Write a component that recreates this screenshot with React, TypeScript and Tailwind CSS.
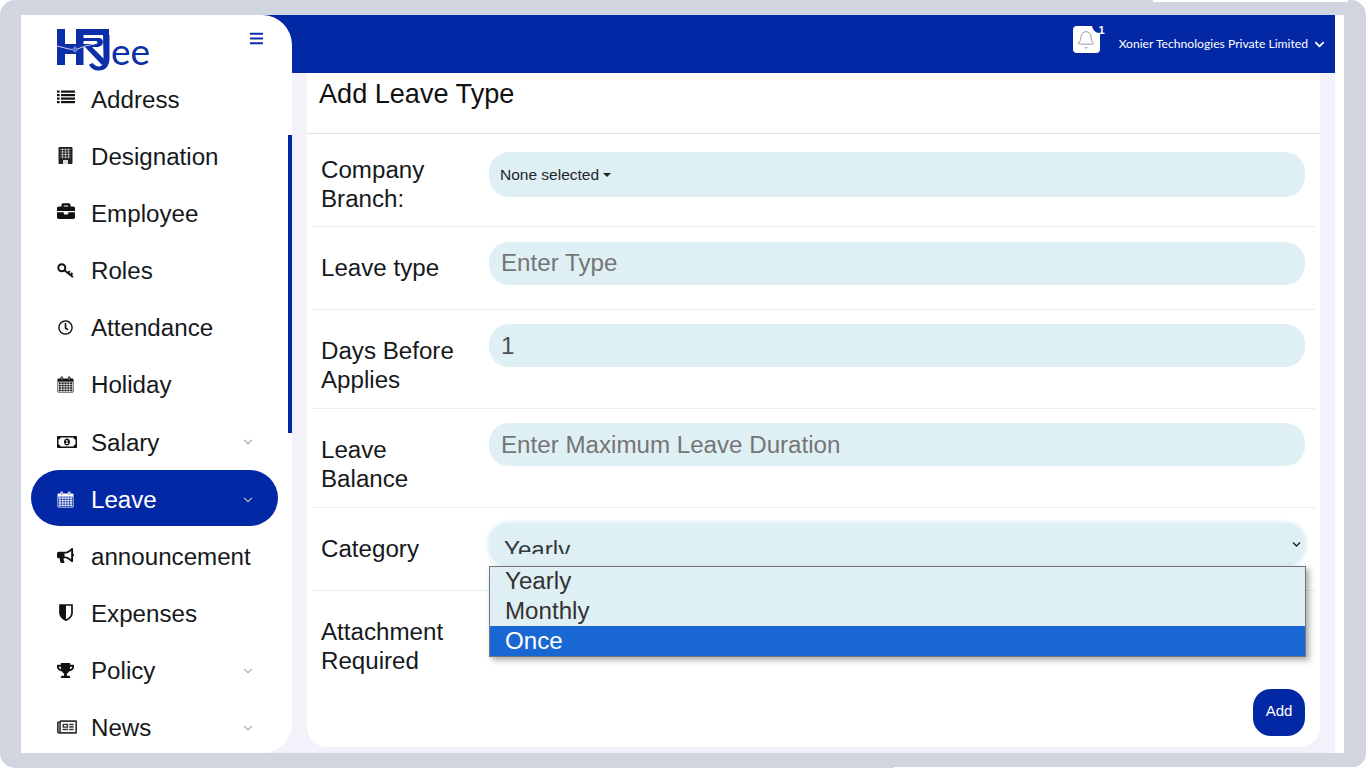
import { Bell, ChevronDown } from "lucide-react";
import type { ReactNode } from "react";
import {
  FaBars,
  FaBriefcase,
  FaBullhorn,
  FaChevronDown,
  FaRegClock,
  FaRegMoneyBillAlt,
  FaRegNewspaper,
  FaTrophy,
} from "react-icons/fa";

function ListIcon() {
  return (
    <svg width="18" height="14" viewBox="0 0 18 14" fill="currentColor" className="-mt-[3px]">
      <rect x="0" y="0.5" width="2.600" height="2.200" />
      <rect x="4" y="0.5" width="14" height="2.200" />
      <rect x="0" y="4" width="2.600" height="2.200" />
      <rect x="4" y="4" width="14" height="2.200" />
      <rect x="0" y="7.500" width="2.600" height="2.200" />
      <rect x="4" y="7.500" width="14" height="2.200" />
      <rect x="0" y="11" width="2.600" height="2.200" />
      <rect x="4" y="11" width="14" height="2.200" />
    </svg>
  );
}

function BuildingIcon() {
  return (
    <svg width="15" height="17" viewBox="0 0 15 17" className="ml-[1px]">
      <rect x="0.500" y="0" width="14" height="17" rx="1" fill="#222" />
      <path d="M2.500 2.500h10M2.500 5h10M2.500 7.500h10M2.500 10h10M4.500 1.500v10M7.500 1.500v10M10.500 1.500v10" stroke="#bbb" strokeWidth=".8" fill="none" />
      <rect x="5" y="13" width="5" height="4" fill="#ddd" />
    </svg>
  );
}

function KeyIcon() {
  return (
    <svg width="17" height="15" viewBox="0 0 17 15" fill="none" stroke="currentColor">
      <circle cx="4.800" cy="4.800" r="3.500" strokeWidth="2" />
      <path d="M7.300 7.300 L16 14 M11 10.200 L12.800 8.200 M13.600 12 L15.400 10" strokeWidth="2" />
    </svg>
  );
}

function ShieldIcon() {
  return (
    <svg width="14" height="17" viewBox="0 0 14 17" className="-mt-[1px] ml-[2px]">
      <path d="M1 1h12v8c0 3.500-3 5.800-6 7.200C4 14.800 1 12.500 1 9z" fill="#fff" stroke="#111" strokeWidth="1.700" />
      <path d="M1 1h6v15.200C4 14.800 1 12.500 1 9z" fill="#111" />
    </svg>
  );
}

function CalendarIcon({ grid }: { grid: string }) {
  return (
    <svg width="17" height="17" viewBox="0 0 17 17" fill="currentColor">
      <path d="M1.500 2.500h2v-1a1 1 0 0 1 1-1h.6a1 1 0 0 1 1 1v1h4.800v-1a1 1 0 0 1 1-1h.6a1 1 0 0 1 1 1v1h2a1 1 0 0 1 1 1v12a1 1 0 0 1-1 1h-14a1 1 0 0 1-1-1v-12a1 1 0 0 1 1-1z" />
      <g fill="none" stroke={grid} strokeWidth=".7">
        <path d="M4.900 1.200v2.600M12.100 1.200v2.600" />
        <path d="M1.500 6h14v9.500h-14z" />
        <path d="M1.500 8.400h14M1.500 10.800h14M1.500 13.200h14M4.300 6v9.500M7.100 6v9.500M9.900 6v9.500M12.700 6v9.500" />
      </g>
    </svg>
  );
}

function Logo() {
  return (
    <svg width="96" height="48" viewBox="0 0 96 48" className="mt-[12px] block">
      <g fill="#0a2fa8">
        <rect x="0" y="2" width="8" height="36" />
        <rect x="19" y="2" width="7.500" height="36" />
        <rect x="8" y="17" width="11" height="10" />
        <rect x="26" y="2" width="26" height="6" />
        <path d="M26 11h16c5 0 6 8-1 9h-15v-3h13c2 0 2-3 0-3h-13z" />
        <path d="M28 20h7l14 14-4 4z" />
        <path d="M46 8h6.500v23c0 8-4 12.500-10.500 12.500-5 0-8-2-10-6l4-1.500c1 2 3.500 3.500 6 3.500 3.500 0 4.500-3.500 4.500-8.500z" />
      </g>
      <path d="M0 19 L12 22 L18 23 L28 19 L38 17" stroke="#fff" strokeWidth="0.800" fill="none" />
      <rect x="15.500" y="20" width="5" height="5" fill="#5f7dcc" transform="rotate(45 18 22.500)" />
      <text x="54" y="38" fill="#0a2fa8" fontSize="37" className="[font-family:Lato,sans-serif]">
        ee
      </text>
    </svg>
  );
}

const NAV: { label: string; icon: ReactNode; caret?: boolean; active?: boolean }[] = [
  { label: "Address", icon: <ListIcon /> },
  { label: "Designation", icon: <BuildingIcon /> },
  { label: "Employee", icon: <FaBriefcase size={18} className="-mt-[4px]" /> },
  { label: "Roles", icon: <KeyIcon /> },
  { label: "Attendance", icon: <FaRegClock size={15} className="ml-[1px]" /> },
  { label: "Holiday", icon: <CalendarIcon grid="#fff" /> },
  { label: "Salary", icon: <FaRegMoneyBillAlt size={20} />, caret: true },
  { label: "Leave", icon: <CalendarIcon grid="#0328a5" />, caret: true, active: true },
  { label: "announcement", icon: <FaBullhorn size={17} /> },
  { label: "Expenses", icon: <ShieldIcon /> },
  { label: "Policy", icon: <FaTrophy size={17} />, caret: true },
  { label: "News", icon: <FaRegNewspaper size={20} className="text-[#333]" />, caret: true },
];

function Field({ className, children }: { className: string; children?: ReactNode }) {
  return <div className={`w-[816px] rounded-[20px] bg-[#dff0f5] ${className}`}>{children}</div>;
}

function Label({ children, top }: { children: ReactNode; top: string }) {
  return <div className={`w-[177px] pl-[9px] text-[24.15px] leading-[29px] text-[#16191c] ${top}`}>{children}</div>;
}

export default function App() {
  return (
    <div className="h-[768px] w-[1366px] overflow-hidden bg-white [font-family:'Liberation_Sans',sans-serif]">
      <div className="relative flex h-full rounded-[15px] bg-[#d1d5e0] pb-[15px] pl-[21px] pr-[22px] pt-[15px]">
        <aside className="relative z-10 h-[738px] w-[271px] shrink-0 overflow-hidden rounded-r-[30px] bg-white">
          <div className="flex h-[55.625px] items-start justify-between pl-[36px] pr-[28px]">
            <Logo />
            <FaBars className="mt-[16px] text-[#0a2fa8]" size={15} />
          </div>
          <nav>
            {NAV.map((n) => (
              <div
                key={n.label}
                className={`ml-[10px] flex w-[247px] items-center rounded-full pl-[26px] pr-[23px] text-[24.15px] leading-[29px] ${
                  n.active ? "-mt-[0.675px] mb-[1.825px] h-[56px] bg-[#0328a5] pt-[4px] text-white" : "h-[57.15px] text-[#16191c]"
                }`}
              >
                <span className={`-mt-[1px] flex w-[34px] shrink-0 ${n.active ? "text-white" : "text-[#111]"}`}>{n.icon}</span>
                <span className="flex-1">{n.label}</span>
                {n.caret && <ChevronDown size={14} className="text-[#a9b4c4]" />}
              </div>
            ))}
          </nav>
          <div className="absolute right-0 top-[120px] h-[298px] w-[4px] bg-[#0328a5]" />
        </aside>

        <div className="-ml-[30px] flex h-[738px] w-[1082px] flex-col bg-white pr-[9px]">
          <header className="relative flex h-[58px] shrink-0 items-center justify-end bg-[#0328a5] pr-[10px] text-white">
            <div className="relative mb-[9px] mr-[19px] flex h-[27px] w-[27px] items-center justify-center rounded-[4px] bg-white">
              <Bell size={20} strokeWidth={1} className="text-[#888]" />
              <span className="absolute -right-[7px] -top-[8px] h-[15px] w-[15px] rounded-full bg-[#0328a5]" />
              <span className="absolute -right-[5px] -top-[2.5px] text-[11px] font-bold leading-[13px]">1</span>
            </div>
            <span className="text-[12.15px] [font-family:Lato,sans-serif]">Xonier Technologies Private Limited</span>
            <FaChevronDown size={11} className="ml-[6px]" />
          </header>

          <div className="min-h-0 flex-1 bg-[#f3f2fb] pb-[6px] pl-[45px] pr-[15px]">
            <main className="h-full rounded-b-[20px] bg-white">
              <div className="h-[61px] border-b border-[#dee2e6] pl-[12px] pt-[4px] text-[27.1px] leading-[33px] text-[#111]">
                Add Leave Type
              </div>
              <div className="px-[5px]">
                <div className="flex h-[93px] border-b border-[#e3f1f5]">
                  <Label top="pt-[20.5px]">
                    Company
                    <br />
                    Branch:
                  </Label>
                  <div className="pt-[18px]">
                    <Field className="flex h-[45px] items-center pl-[11px] text-[15.5px] text-[#212529]">
                      None selected
                      <span className="ml-[4px] mt-[1px] h-0 w-0 border-x-[4px] border-t-[4px] border-x-transparent border-t-[#212529]" />
                    </Field>
                  </div>
                </div>
                <div className="flex h-[83px] border-b border-[#e3f1f5]">
                  <Label top="pt-[26px]">Leave type</Label>
                  <div className="pt-[15px]">
                    <Field className="flex h-[43px] items-center pl-[12px] text-[24.15px] text-[#757575]">Enter Type</Field>
                  </div>
                </div>
                <div className="flex h-[99px] border-b border-[#e3f1f5]">
                  <Label top="pt-[26px]">
                    Days Before
                    <br />
                    Applies
                  </Label>
                  <div className="pt-[14px]">
                    <Field className="flex h-[43px] items-center pl-[12px] pt-[1px] text-[24.15px] text-[#495057]">1</Field>
                  </div>
                </div>
                <div className="flex h-[99px] border-b border-[#e3f1f5]">
                  <Label top="pt-[26px]">
                    Leave
                    <br />
                    Balance
                  </Label>
                  <div className="pt-[14px]">
                    <Field className="flex h-[43px] items-center pl-[12px] pt-[1px] text-[24.15px] text-[#757575]">
                      Enter Maximum Leave Duration
                    </Field>
                  </div>
                </div>
                <div className="flex h-[83px] border-b border-[#e3f1f5]">
                  <Label top="pt-[26px]">Category</Label>
                  <div className="relative z-10 pt-[15px]">
                    <Field className="relative h-[43px] pl-[15px] pt-[12px] text-[24.15px] text-[#343a40] shadow-[0_0_5px_1px_#d5ecf7]">
                      <div className="h-[19px] overflow-hidden leading-[29px]">Yearly</div>
                      <FaChevronDown size={9} className="absolute right-[4px] top-[17px] text-[#222]" />
                    </Field>
                    <div className="absolute left-0 top-[58px] w-[817px] border border-[#767676] bg-[#dff0f5] text-[24.15px] leading-[30px] text-[#333] shadow-[3px_3px_6px_rgba(0,0,0,0.35)]">
                      <div className="h-[29px] pl-[15px] leading-[28px]">Yearly</div>
                      <div className="h-[30px] pl-[15px]">Monthly</div>
                      <div className="h-[30px] bg-[#1967d2] pl-[15px] text-white">Once</div>
                    </div>
                  </div>
                </div>
                <div className="flex h-[98px]">
                  <Label top="pt-[26px]">
                    Attachment
                    <br />
                    Required
                  </Label>
                  <div className="pt-[15px]">
                    <Field className="h-[43px]" />
                  </div>
                </div>
                <div className="flex justify-end pr-[10px]">
                  <button className="h-[47px] w-[52px] rounded-[18px] bg-[#0328a5] pb-[2px] text-[15px] text-white">Add</button>
                </div>
              </div>
            </main>
          </div>
        </div>

        <div className="absolute right-[18px] top-0 h-[2px] w-[195px] bg-white" />
        <div className="absolute bottom-0 right-[10px] h-[1px] w-[462px] bg-white" />
      </div>
    </div>
  );
}
